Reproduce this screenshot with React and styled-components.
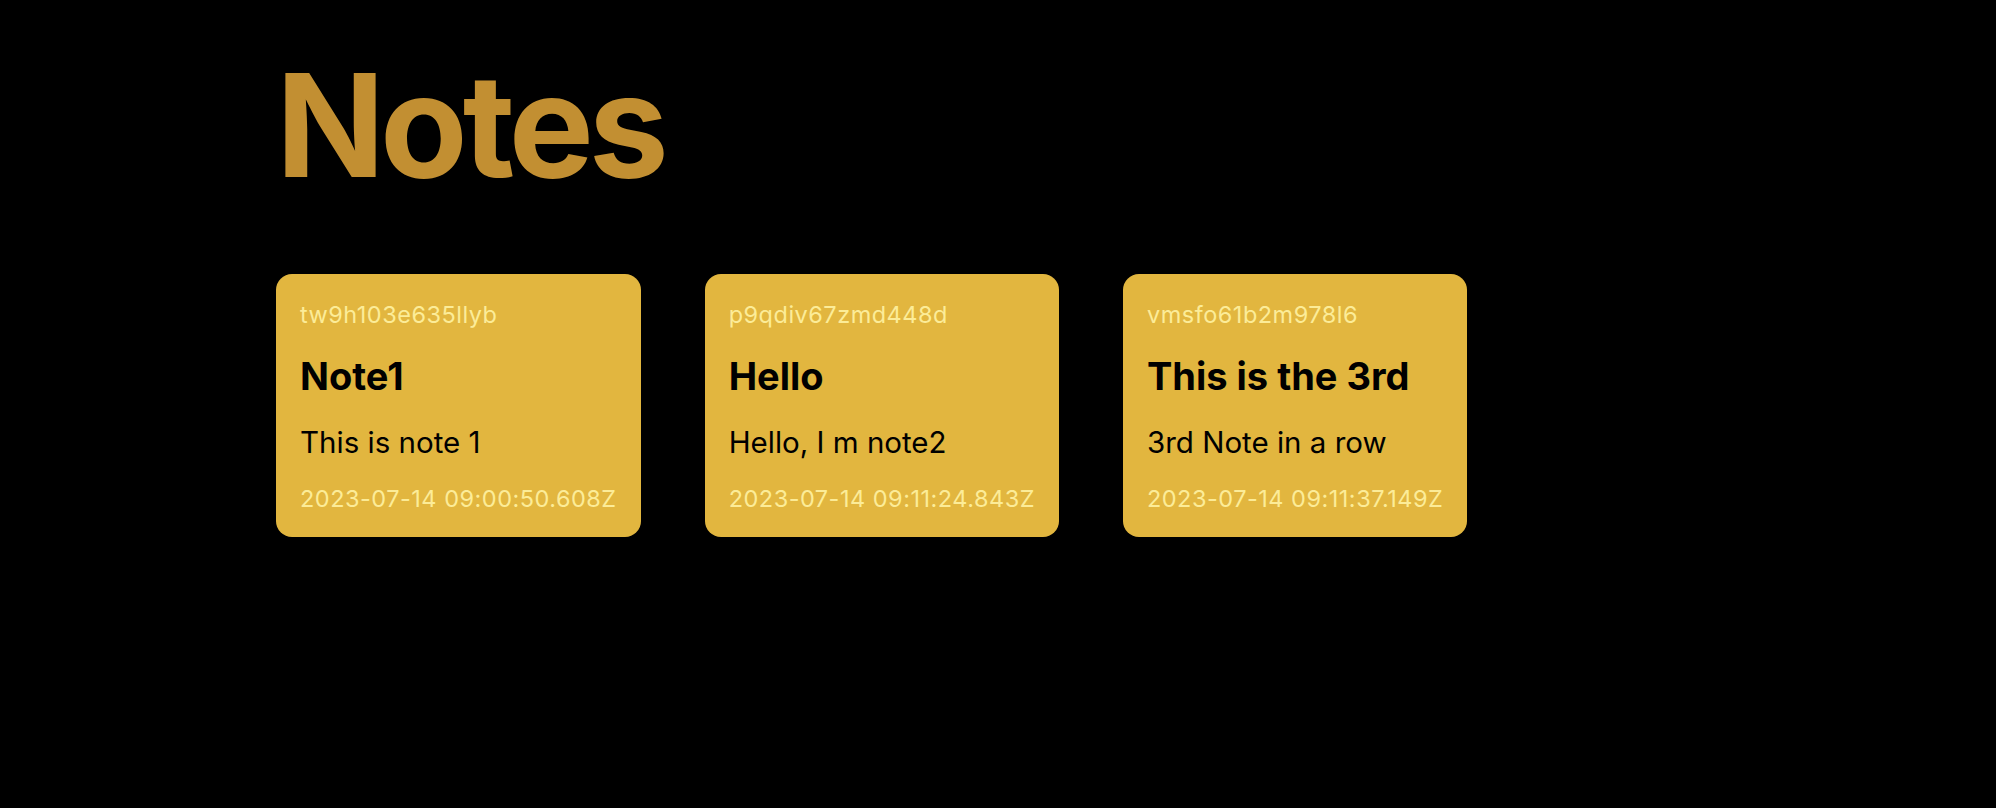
import React from 'react'
import styled, { createGlobalStyle } from 'styled-components'

const notes = [
    { id: 'tw9h103e635llyb', title: 'Note1', content: 'This is note 1', created: '2023-07-14 09:00:50.608Z' },
    { id: 'p9qdiv67zmd448d', title: 'Hello', content: 'Hello, I m note2', created: '2023-07-14 09:11:24.843Z' },
    { id: 'vmsfo61b2m978l6', title: 'This is the 3rd', content: '3rd Note in a row', created: '2023-07-14 09:11:37.149Z' },
]

const App = () => {
    return (
        <>
            <GlobalStyle />
            <Page>
                <Title>Notes</Title>
                <Grid>
                    {notes.map((note) => (
                        <Card key={note.id}>
                            <Meta>{note.id}</Meta>
                            <NoteTitle>{note.title}</NoteTitle>
                            <NoteBody>{note.content}</NoteBody>
                            <Meta>{note.created}</Meta>
                        </Card>
                    ))}
                </Grid>
            </Page>
        </>
    )
}

export default App

const GlobalStyle = createGlobalStyle`
    html, body {
        margin:0;
        padding:0;
        background:#000;
    }
    body {
        font-family:Inter, "Noto Sans", sans-serif;
    }
`

const Page = styled.main`
    min-height:808px;
    background:#000;
    padding:39px 276px 0;
    box-sizing:border-box;
`

const Title = styled.h1`
    margin:0 0 63px;
    font-size:143px;
    line-height:1.2;
    font-weight:700;
    letter-spacing:-5px;
    color:#c28f32;
`

const Grid = styled.div`
    display:flex;
    align-items:flex-start;
    gap:64px;
`

const Card = styled.div`
    background:#e2b63f;
    border-radius:16px;
    padding:27.5px 24px 24px;
    display:flex;
    flex-direction:column;
    gap:25px;
`

const Meta = styled.span`
    font-size:23.5px;
    line-height:1.2;
    letter-spacing:0.5px;
    color:#fcec98;
`

const NoteTitle = styled.h2`
    margin:0;
    font-size:38px;
    line-height:1.2;
    font-weight:700;
    color:#000;
`

const NoteBody = styled.p`
    margin:0;
    font-size:29.5px;
    line-height:1.2;
    color:#000;
`
